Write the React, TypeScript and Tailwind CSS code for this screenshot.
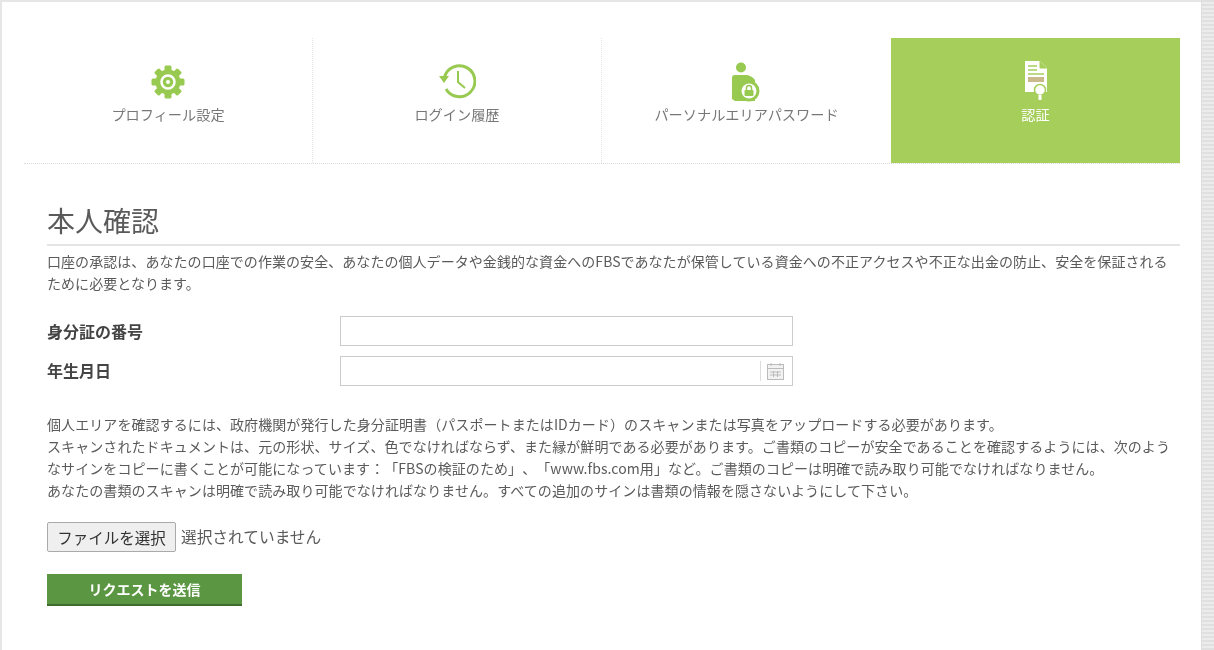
const GearIcon = () => (
    <svg width="34" height="34" viewBox="0 0 34 34">
        {[0, 45, 90, 135].map((a) => (
            <rect key={a} x="13.5" y="0.5" width="7" height="33" rx="1.5" fill="#98c950" transform={`rotate(${a} 17 17)`} />
        ))}
        <circle cx="17" cy="17" r="12.5" fill="#98c950" />
        <circle cx="17" cy="17" r="6.5" fill="none" stroke="#fff" strokeWidth="2.5" />
        <circle cx="17" cy="17" r="2" fill="#fff" />
    </svg>
);

const ClockIcon = () => (
    <svg width="38" height="36" viewBox="0 0 38 36" fill="none" stroke="#98c950" className="-mt-[2px]">
        <path d="M8 26 A15.5 15.5 0 1 0 6.5 14" strokeWidth="3" />
        <polygon points="1,13 11,13 6,20" fill="#98c950" stroke="none" />
        <path d="M20 8 V19 L27 25" strokeWidth="2" />
    </svg>
);

const PersonLockIcon = () => (
    <svg width="32" height="40" viewBox="0 0 32 40">
        <circle cx="10" cy="5.5" r="5" fill="#98c950" />
        <path d="M1 16 a3 3 0 0 1 3-3 h12 a13 13 0 0 1 8 5 v21 H4 l-3-2 Z" fill="#98c950" />
        <circle cx="18" cy="29" r="10.5" fill="#98c950" />
        <circle cx="18" cy="29" r="7.5" fill="#fff" />
        <rect x="13.5" y="28" width="9" height="6" rx="1" fill="#98c950" />
        <path d="M15.5 28 v-2 a2.5 2.5 0 0 1 5 0 v2" fill="none" stroke="#98c950" strokeWidth="1.5" />
    </svg>
);

const CertificateIcon = () => (
    <svg width="24" height="40" viewBox="0 0 24 40" className="-mt-[5px]">
        <path d="M1 1 H16 L23 8 V32 H1 Z" fill="#fff" />
        <path d="M16 1 V8 H23" fill="#a6ce5b" stroke="#a6ce5b" strokeWidth="1" />
        <path d="M4 6 H13 M4 10 H13 M4 14 H20" stroke="#a6ce5b" strokeWidth="1.3" />
        <rect x="4" y="17" width="16" height="5" fill="#c9b98b" />
        <circle cx="16" cy="30" r="5.5" fill="#fff" stroke="#a6ce5b" strokeWidth="1.5" />
        <rect x="14.5" y="35" width="3" height="5" fill="#fff" />
    </svg>
);

const tabs = [
    { label: "プロフィール設定", icon: <GearIcon /> },
    { label: "ログイン履歴", icon: <ClockIcon /> },
    { label: "パーソナルエリアパスワード", icon: <PersonLockIcon /> },
    { label: "認証", icon: <CertificateIcon />, active: true },
];

const App = () => {
    return (
        <div className="flex h-[650px] w-[1214px] overflow-hidden bg-white font-['Noto_Sans_CJK_JP',sans-serif] text-[14px] leading-[22px] text-[#5a5a5a] blur-[0.5px] [text-spacing-trim:space-all]">
            <div className="flex-1 border-t-2 border-l-2 border-[#e6e6e6] pt-[36px] pr-[21px] pl-[22px]">
                <div className="grid h-[126px] grid-cols-4 border-b border-dotted border-[#dcdcdc] text-[14.2px]">
                    {tabs.map((tab, i) => (
                        <div
                            key={tab.label}
                            className={
                                tab.active
                                    ? "flex flex-col items-center bg-[#a6ce5b] pt-[24px] text-white"
                                    : i < 2
                                      ? "flex flex-col items-center border-r border-dotted border-[#e4e4e4] pt-[24px] text-[#777]"
                                      : "flex flex-col items-center pt-[24px] text-[#777]"
                            }
                        >
                            <div className="flex h-[40px] items-center justify-center">{tab.icon}</div>
                            <p className="mt-[1px]">{tab.label}</p>
                        </div>
                    ))}
                </div>

                <div className="pl-[23px]">
                    <h1 className="mt-[36px] border-b-2 border-[#e4e4e4] pb-[4px] text-[28px] leading-[40px] font-normal">本人確認</h1>
                    <p className="mt-[4px] tracking-[0.06px]">
                        口座の承認は、あなたの口座での作業の安全、あなたの個人データや金銭的な資金へのFBSであなたが保管している資金への不正アクセスや不正な出金の防止、安全を保証される
                        <br />
                        ために必要となります。
                    </p>

                    <div className="mt-[22px] flex flex-col gap-[10px]">
                        <div className="flex items-center">
                            <label className="w-[293px] text-[16px] font-bold text-[#444]">身分証の番号</label>
                            <input className="h-[30px] w-[453px] border border-[#ccc] bg-white" />
                        </div>
                        <div className="flex items-center">
                            <label className="w-[293px] pb-[3px] text-[16px] font-bold text-[#444]">年生月日</label>
                            <div className="flex h-[30px] w-[453px] items-center justify-end border border-[#ccc] bg-white pr-[8px]">
                                <div className="mr-[6px] h-[20px] w-px bg-[#ddd]" />
                                <svg width="17" height="17" viewBox="0 0 17 17" fill="none" stroke="#bbb">
                                    <rect x="0.5" y="1.5" width="16" height="15" fill="#f2f2f2" />
                                    <path d="M0.5 5.5 H16.5 M3 9 H14 M3 12 H14 M6.5 8 V14 M10.5 8 V14 M4 0 V3 M13 0 V3" />
                                </svg>
                            </div>
                        </div>
                    </div>

                    <div className="mt-[27px] tracking-[0.08px]">
                        <p>個人エリアを確認するには、政府機関が発行した身分証明書（パスポートまたはIDカード）のスキャンまたは写真をアップロードする必要があります。</p>
                        <p>
                            スキャンされたドキュメントは、元の形状、サイズ、色でなければならず、また縁が鮮明である必要があります。ご書類のコピーが安全であることを確認するようには、次のよう
                            <br />
                            なサインをコピーに書くことが可能になっています：「FBSの検証のため」、「www.fbs.com用」など。ご書類のコピーは明確で読み取り可能でなければなりません。
                        </p>
                        <p>あなたの書類のスキャンは明確で読み取り可能でなければなりません。すべての追加のサインは書類の情報を隠さないようにして下さい。</p>
                    </div>

                    <div className="mt-[21px] flex items-center gap-[5px] text-[15.5px]">
                        <button className="h-[30px] w-[129px] rounded-[2px] border border-[#aaa] bg-[#efefef] text-[#333]">ファイルを選択</button>
                        <span className="text-[15.7px]">選択されていません</span>
                    </div>

                    <button className="mt-[22px] block h-[32px] w-[195px] border-b-2 border-[#3f6b2e] bg-[#5b9642] text-[14px] font-bold text-white">
                        リクエストを送信
                    </button>
                </div>
            </div>
            <div className="w-[13px] border-l border-[#ddd] bg-[repeating-linear-gradient(0deg,#e0e0e0_0,#e0e0e0_2px,#ececec_2px,#ececec_4px)]" />
        </div>
    );
};

export default App;
